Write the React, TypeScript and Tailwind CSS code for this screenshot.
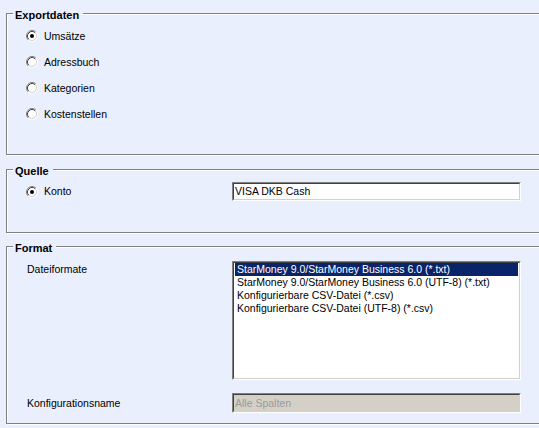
import type { ReactNode } from 'react';

const formats = [
  'StarMoney 9.0/StarMoney Business 6.0 (*.txt)',
  'StarMoney 9.0/StarMoney Business 6.0 (UTF-8) (*.txt)',
  'Konfigurierbare CSV-Datei (*.csv)',
  'Konfigurierbare CSV-Datei (UTF-8) (*.csv)',
];

const Radio = ({ checked }: { checked?: boolean }) => (
  <svg width="12" height="12" viewBox="0 0 12 12" className="shrink-0">
    <circle cx="6" cy="6" r="5" fill="#fff" />
    <path d="M2.11 9.89 A5.5 5.5 0 0 1 9.89 2.11" fill="none" stroke="#808080" />
    <path d="M9.89 2.11 A5.5 5.5 0 0 1 2.11 9.89" fill="none" stroke="#fff" />
    <path d="M2.82 9.18 A4.5 4.5 0 0 1 9.18 2.82" fill="none" stroke="#404040" />
    <path d="M9.18 2.82 A4.5 4.5 0 0 1 2.82 9.18" fill="none" stroke="#d4d0c8" />
    {checked && <circle cx="6" cy="6" r="2" fill="#000" />}
  </svg>
);

// classic sunken 3d edge
const Sunken = ({ className, children }: { className: string; children: ReactNode }) => (
  <div className={`border border-t-[#808080] border-l-[#808080] border-b-white border-r-white ${className}`}>
    <div className="h-full border border-t-[#404040] border-l-[#404040] border-b-[#d4d0c8] border-r-[#d4d0c8]">
      {children}
    </div>
  </div>
);

const Group = ({ title, className, children }: { title: string; className: string; children: ReactNode }) => (
  <div
    className={`relative ml-[6px] w-[600px] border border-[#808080] shadow-[inset_1px_1px_0_#fff,1px_1px_0_#fff] ${className}`}
  >
    <span className="absolute left-[6px] top-[-5px] bg-[#e9effd] pl-[2px] pr-[4px] text-[11px] font-bold leading-[13px]">
      {title}
    </span>
    {children}
  </div>
);

export default function App() {
  return (
    <div
      className="h-[428px] w-[539px] overflow-hidden bg-[#e9effd] text-[10.5px] leading-[13px] text-black"
      style={{ fontFamily: '"Liberation Sans", Arial, sans-serif' }}
    >
      <Group title="Exportdaten" className="mt-[13px] h-[142px] pl-[19px] pt-[9px]">
        {['Umsätze', 'Adressbuch', 'Kategorien', 'Kostenstellen'].map((item, i) => (
          <div key={item} className="flex h-[26px] items-center gap-[6px]">
            <Radio checked={i === 0} />
            <span>{item}</span>
          </div>
        ))}
      </Group>

      <Group title="Quelle" className="mt-[14px] h-[64px] pl-[19px] pt-[12px]">
        <div className="flex items-center">
          <div className="flex w-[206px] items-center gap-[6px]">
            <Radio checked />
            <span>Konto</span>
          </div>
          <Sunken className="h-[19px] w-[289px] bg-white">
            <div className="pl-px leading-[15px]">VISA DKB Cash</div>
          </Sunken>
        </div>
      </Group>

      <Group title="Format" className="mt-[13px] h-[178px] pl-[20px] pt-[14px]">
        <div className="flex items-start">
          <div className="w-[205px] pt-[2px]">Dateiformate</div>
          <Sunken className="h-[119px] w-[289px] bg-white">
            <div className="px-px">
              {formats.map((f, i) => (
                <div
                  key={f}
                  className={`h-[13px] whitespace-nowrap pl-[2px] ${i === 0 ? 'bg-[#0a246a] text-white' : ''}`}
                >
                  {f}
                </div>
              ))}
            </div>
          </Sunken>
        </div>
        <div className="mt-[13px] flex items-center">
          <div className="w-[205px]">Konfigurationsname</div>
          <Sunken className="h-[20px] w-[289px] bg-[#d4d0c8]">
            <div className="pl-px leading-[16px] text-[#9a9a9a]">Alle Spalten</div>
          </Sunken>
        </div>
      </Group>
    </div>
  );
}
